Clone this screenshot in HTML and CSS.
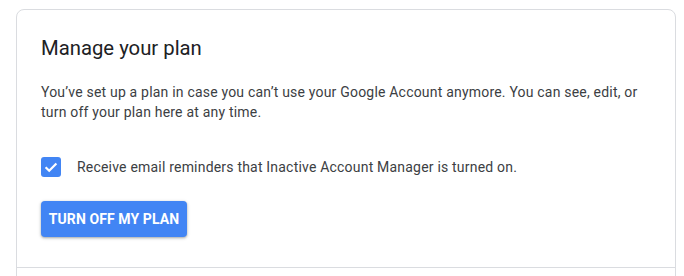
FILE: index.html
```html
<!DOCTYPE html>
<html lang="en">
<head>
<meta charset="utf-8">
<title>Manage your plan</title>
<link rel="stylesheet" href="styles.css">
</head>
<body>
<div class="card">
  <div class="card-body">
    <h1 class="title">Manage your plan</h1>
    <p class="desc">You’ve set up a plan in case you can’t use your Google Account anymore. You can see, edit, or turn off your plan here at any time.</p>
    <label class="check-row">
      <span class="checkbox">
        <svg viewBox="0 0 20 20" width="20" height="20" aria-hidden="true"><path d="M4.6 10.2l3.6 3.6 7.2-7.4" fill="none" stroke="#fff" stroke-width="2.2"/></svg>
      </span>
      <span class="check-label">Receive email reminders that Inactive Account Manager is turned on.</span>
    </label>
    <button class="btn">Turn off my plan</button>
  </div>
  <div class="card-footer"></div>
</div>
</body>
</html>
```
FILE: styles.css
```css
html, body {
  margin: 0;
  padding: 0;
  background: #fff;
}
body {
  padding: 9px 8px 0 16px;
  font-family: Roboto, "Liberation Sans", Arial, sans-serif;
  overflow: hidden;
}
.card {
  border: 1px solid #dadce0;
  border-radius: 8px;
  height: 400px;
  box-sizing: border-box;
}
.card-body {
  padding: 24px 24px 30px 24px;
  border-bottom: 1px solid #dadce0;
}
.title {
  margin: 0;
  font-size: 20.3px;
  line-height: 28px;
  font-weight: 400;
  color: #202124;
}
.desc {
  margin: 20px 0 0 0;
  font-size: 14px;
  line-height: 20px;
  letter-spacing: 0.2px;
  color: #3c4043;
}
.check-row {
  display: flex;
  align-items: center;
  gap: 16px;
  margin-top: 34px;
  height: 20px;
  padding-top: 1px;
}
.checkbox {
  width: 20px;
  height: 20px;
  border-radius: 3px;
  background: #4285f4;
  display: flex;
  flex: none;
}
.check-label {
  font-size: 14px;
  line-height: 20px;
  letter-spacing: 0.2px;
  color: #3c4043;
}
.btn {
  display: block;
  margin-top: 24px;
  width: 146px;
  height: 36px;
  border: none;
  border-radius: 4px;
  background: #4285f4;
  color: #fff;
  font-family: Roboto, "Liberation Sans", Arial, sans-serif;
  font-size: 14px;
  font-weight: 700;
  letter-spacing: 0.1px;
  text-transform: uppercase;
  padding: 0;
  box-shadow: 0 1px 2px rgba(60,64,67,.3), 0 1px 3px 1px rgba(60,64,67,.15);
}
```
